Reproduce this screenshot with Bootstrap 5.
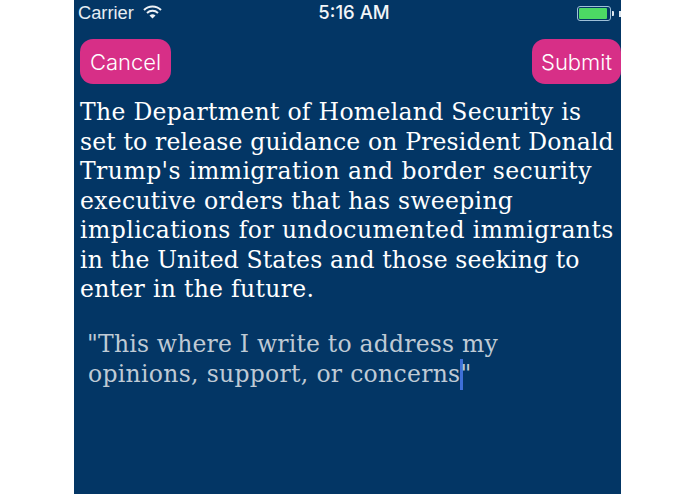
<!DOCTYPE html>
<html lang="en"><head><meta charset="utf-8"><title>Comment</title>
<link href="https://cdn.jsdelivr.net/npm/bootstrap@5.3.0/dist/css/bootstrap.min.css" rel="stylesheet">
<style>
html,body{height:100%;margin:0;background:#fff;overflow:hidden}
.phone{width:547px;height:494px;background:#033665;color:#fff;font-family:"Liberation Sans",sans-serif;overflow:hidden}
.statusbar{height:26px;font-size:18.300px;color:#e6edf3;padding-left:4px}
.statusbar .clock{font-weight:500;color:#f2f5f8;font-family:Inter,"Liberation Sans",sans-serif;font-size:18.500px}
.col-left{width:125px}
.wifi{margin:-2px 0 0 1px}
.col-right{width:116px;padding-left:72px;overflow:hidden;white-space:nowrap}
.batt{width:44px;height:15px;flex:none}
.pinkbtn{background:#d72f87;border:0;color:#fff;font-size:22px;height:45px;line-height:47px;padding:0;border-radius:13px;font-family:Inter,"Liberation Sans",sans-serif;font-weight:300}
.pinkbtn:hover{background:#d72f87;color:#fff}
.btn-a{width:91px}.btn-b{width:89px}
.btnrow{padding:13px 0 0 6px}
.bodytext{font-family:"DejaVu Serif",serif;font-size:23.500px;line-height:29.500px;letter-spacing:.3px;padding:0 0 0 6px;margin:14px 0 0;white-space:nowrap}
.tight{letter-spacing:.15px}
.loose{letter-spacing:.45px}
.reply{font-family:"DejaVu Serif",serif;font-size:23.500px;line-height:30px;letter-spacing:.2px;color:#bfcad5;padding-left:13px;margin:24px 0 0;white-space:nowrap}
.reply-b{letter-spacing:.3px;padding-left:1px}
.caret-bar{display:inline-block;width:3px;height:31px;background:#3f6fd8;vertical-align:-8px;margin:0 -3px 0 0}
</style></head>
<body>
<div class="phone mx-auto">
  <div class="statusbar d-flex align-items-center justify-content-between">
    <div class="col-left d-flex align-items-center gap-2">
      <span>Carrier</span>
      <svg class="wifi" width="19" height="14" viewBox="0 0 19 14" aria-hidden="true"><g fill="none" stroke="#eef2f6" stroke-width="2"><path d="M1 5a12 12 0 0 1 17 0"/><path d="M4 8a8 8 0 0 1 11 0"/></g><path d="M6.500 10.500a4.500 4.500 0 0 1 6 0L9.500 13.500z" fill="#eef2f6"/></svg>
    </div>
    <span class="clock">5:16 AM</span>
    <div class="col-right d-flex align-items-center">
      <svg class="batt" viewBox="0 0 44 15" aria-hidden="true"><rect x=".5" y=".5" width="33" height="14" rx="2.500" fill="none" stroke="#9fc0d8"/><rect x="2" y="2" width="28" height="11" rx="1" fill="#4cd964"/><path d="M35 5h1a1 1 0 0 1 1 1v3a1 1 0 0 1-1 1h-1z" fill="#dfe8ef"/><rect x="42" y="5" width="2" height="6" fill="#dfe8ef"/></svg>
    </div>
  </div>
  <div class="btnrow d-flex justify-content-between">
    <button class="btn pinkbtn btn-a" type="button">Cancel</button>
    <button class="btn pinkbtn btn-b" type="button">Submit</button>
  </div>
  <p class="bodytext">The Department of Homeland Security is<br><span class="tight">set to release guidance on President Donald</span><br><span class="loose">Trump's immigration and border security</span><br>executive orders that has sweeping<br><span class="loose">implications for undocumented immigrants</span><br><span class="tight">in the United States and those seeking to</span><br>enter in the future.</p>
  <p class="reply">"This where I write to address my<br><span class="reply-b">opinions, support, or concerns<span class="caret-bar"></span>"</span></p>
</div>
<script src="https://cdn.jsdelivr.net/npm/bootstrap@5.3.0/dist/js/bootstrap.bundle.min.js"></script>
</body></html>
